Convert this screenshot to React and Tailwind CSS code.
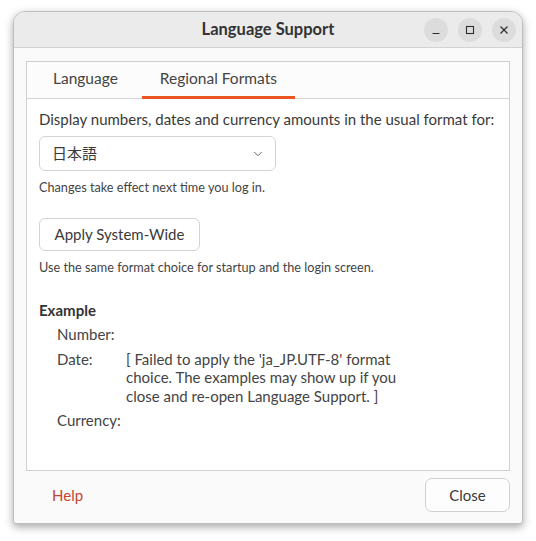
import { ChevronDown } from 'lucide-react';

const font = { fontFamily: 'Lato, "Noto Sans CJK JP", sans-serif' };

function TitleButton({ children }) {
  return (
    <button className="w-6 h-6 rounded-full bg-[#dcdcdc] flex items-center justify-center text-[#2e2e2e]">
      {children}
    </button>
  );
}

function TitleBar() {
  return (
    <div className="relative h-[36px] shrink-0 bg-[#ebebeb] border-b border-[#d2d2d2] flex items-center justify-center">
      <span className="text-[16.5px] font-bold text-[#333]">Language Support</span>
      <div className="absolute right-[6px] top-[6px] flex gap-[10px]">
        <TitleButton>
          <svg width="10" height="10" viewBox="0 0 10 10"><path d="M1.5 8.5h7" stroke="currentColor" strokeWidth="1.2" /></svg>
        </TitleButton>
        <TitleButton>
          <svg width="10" height="10" viewBox="0 0 10 10"><rect x="1.5" y="1.5" width="7" height="7" fill="none" stroke="currentColor" strokeWidth="1.1" /></svg>
        </TitleButton>
        <TitleButton>
          <svg width="10" height="10" viewBox="0 0 10 10"><path d="M1.5 1.5l7 7M8.5 1.5l-7 7" stroke="currentColor" strokeWidth="1.2" /></svg>
        </TitleButton>
      </div>
    </div>
  );
}

function Tabs() {
  const tabs = ['Language', 'Regional Formats'];
  const active = 1;
  return (
    <div className="h-[37px] shrink-0 bg-[#fcfcfc] border-b border-[#d4d4d4] flex gap-[6px] pl-2">
      {tabs.map((t, i) => (
        <div
          key={t}
          className={`px-[18px] flex items-center text-[15.5px] text-[#444] border-b-[3px] -mb-px ${i === active ? 'border-[#e95420]' : 'border-transparent'}`}
        >
          {t}
        </div>
      ))}
    </div>
  );
}

function FormatsPage() {
  return (
    <div className="flex-1 bg-white px-3 pt-[10px] text-[#3a3a3a]">
      <p className="text-[15px] leading-5">Display numbers, dates and currency amounts in the usual format for:</p>
      <div className="mt-[7px] w-[237px] h-[35px] rounded-[6px] border border-[#d3d3d3] bg-white flex items-center justify-between pl-3 pr-[10px]">
        <span className="text-[15px]">日本語</span>
        <ChevronDown size={14} strokeWidth={1.5} className="text-[#555]" />
      </div>
      <p className="mt-2 text-[12.7px] leading-4 text-[#444]">Changes take effect next time you log in.</p>
      <button className="mt-[23px] h-[33px] w-[161px] rounded-[6px] border border-[#d3d3d3] bg-white text-[15px] text-[#3a3a3a]">
        Apply System-Wide
      </button>
      <p className="mt-2 text-[12.7px] leading-4 text-[#444]">Use the same format choice for startup and the login screen.</p>

      <h3 className="mt-[25px] text-[15px] leading-5 font-bold text-[#333]">Example</h3>
      <div className="mt-[5px] pl-[18px] grid grid-cols-[69px_1fr] gap-y-[6px] text-[15px] leading-[18.5px] text-[#444]">
        <span>Number:</span>
        <span></span>
        <span>Date:</span>
        <span className="w-[275px]">[ Failed to apply the 'ja_JP.UTF-8' format choice. The examples may show up if you close and re-open Language Support. ]</span>
        <span>Currency:</span>
        <span></span>
      </div>
    </div>
  );
}

export default function App() {
  return (
    <div className="min-h-[541px] bg-white pt-[11px] pl-[13px]" style={font}>
      <div className="w-[510px] h-[513px] rounded-t-[12px] rounded-b-[3px] border border-[#bdbdbd] bg-[#fafafa] shadow-[0_3px_8px_rgba(0,0,0,0.35)] flex flex-col overflow-hidden">
        <TitleBar />
        <div className="flex-1 flex flex-col px-3 pt-[13px] pb-[11px]">
          <div className="h-[410px] border border-[#d0d0d0] flex flex-col">
            <Tabs />
            <FormatsPage />
          </div>
          <div className="mt-[7px] flex items-center justify-between">
            <button className="ml-[13px] px-[13px] h-[34px] text-[15px] text-[#c4452f]">Help</button>
            <button className="w-[85px] h-[34px] rounded-[7px] border border-[#d0d0d0] bg-[#fdfdfd] text-[15px] text-[#3a3a3a]">
              Close
            </button>
          </div>
        </div>
      </div>
    </div>
  );
}
